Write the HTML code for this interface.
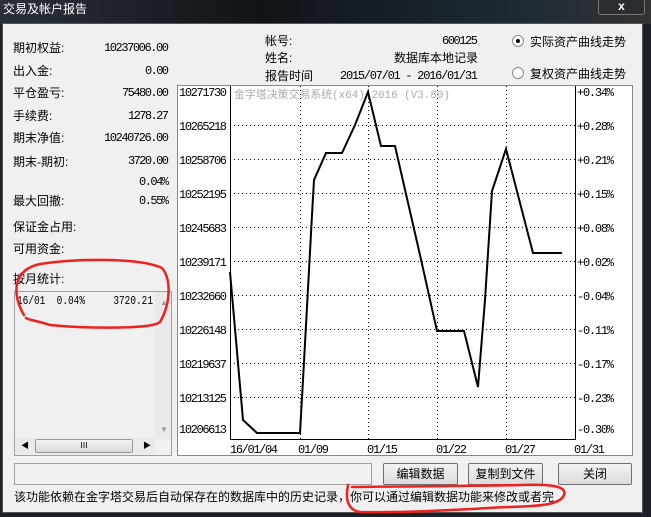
<!DOCTYPE html>
<html><head><meta charset="utf-8"><style>
*{margin:0;padding:0;box-sizing:border-box}
body{width:651px;height:517px;background:#1a2026;position:relative;overflow:hidden;font-family:"Liberation Sans","Noto Sans CJK SC",sans-serif;font-size:12px;color:#000}
.a{position:absolute;white-space:nowrap}
.btn{position:absolute;border:1px solid #707070;background:linear-gradient(#f2f2f2,#dcdcdc);border-radius:2px;text-align:center;line-height:20px;font-size:12px}
</style></head><body>
<div class="a" style="left:0;top:0;width:651px;height:24px;background:linear-gradient(90deg,#2a3038,#101418 40%,#1e2a33 80%,#333)"></div>
<div class="a" style="left:3px;top:0px;color:#fff;font-size:12px;line-height:18px">交易及帐户报告</div>
<div class="a" style="left:598px;top:-2px;width:47px;height:17px;border:1px solid #777;border-radius:3px;background:#2a2e33;color:#fff;text-align:center;font-weight:bold;line-height:14px">x</div>
<div class="a" style="left:2px;top:23px;width:641px;height:490px;background:#f0f0f0;border:1px solid #555"></div>

<div class="a" style="left:13px;top:39px">期初权益:</div>
<div class="a" style="left:13px;top:62px">出入金:</div>
<div class="a" style="left:13px;top:84px">平仓盈亏:</div>
<div class="a" style="left:13px;top:107px">手续费:</div>
<div class="a" style="left:13px;top:129px">期末净值:</div>
<div class="a" style="left:13px;top:153px">期末-期初:</div>
<div class="a" style="left:13px;top:192px">最大回撤:</div>
<div class="a" style="left:13px;top:218px">保证金占用:</div>
<div class="a" style="left:13px;top:240px">可用资金:</div>
<div class="a" style="left:13px;top:270px">按月统计:</div>

<div class="a" style="left:14px;top:291px;width:158px;height:165px;border:1px solid #a0a0a0;background:#f0f0f0"></div>
<div class="a" style="left:155px;top:292px;width:16px;height:147px;background:#eaeaea"></div>
<div class="a" style="left:160px;top:298px;color:#999;font-size:8px">▲</div>
<div class="a" style="left:160px;top:425px;color:#999;font-size:8px">▼</div>
<div class="a" style="left:15px;top:438px;width:140px;height:16px;background:#eaeaea"></div>
<div class="a" style="left:35px;top:439px;width:98px;height:14px;border:1px solid #999;border-radius:2px;background:linear-gradient(#f4f4f4,#d8d8d8);text-align:center;font-size:8px;line-height:12px">Ⅲ</div>
<div class="a" style="left:21px;top:440px;font-size:8px">◀</div>
<div class="a" style="left:143px;top:440px;font-size:8px">▶</div>

<div class="a" style="left:265px;top:32px">帐号:</div>
<div class="a" style="left:265px;top:49px">姓名:</div><div class="a" style="left:380px;top:49px;width:98px;text-align:right">数据库本地记录</div>
<div class="a" style="left:265px;top:67px">报告时间</div>
<div class="a" style="left:512px;top:35px;width:12px;height:12px;border-radius:50%;border:1px solid #888;background:#fff"></div><div class="a" style="left:516px;top:39px;width:4px;height:4px;border-radius:50%;background:#000"></div>
<div class="a" style="left:530px;top:33px">实际资产曲线走势</div>
<div class="a" style="left:512px;top:67px;width:12px;height:12px;border-radius:50%;border:1px solid #888;background:#fff"></div>
<div class="a" style="left:530px;top:65px">复权资产曲线走势</div>

<svg class="a" style="left:0;top:0" width="651" height="517">
<g font-family="Liberation Mono,monospace" font-size="12" lengthAdjust="spacingAndGlyphs" text-anchor="end">
<text x="169" y="51" textLength="65">10237006.00</text>
<text x="169" y="74" textLength="24">0.00</text>
<text x="169" y="96" textLength="47">75480.00</text>
<text x="169" y="119" textLength="41">1278.27</text>
<text x="169" y="141" textLength="65">10240726.00</text>
<text x="169" y="164" textLength="41">3720.00</text>
<text x="169" y="185" textLength="30">0.04%</text>
<text x="169" y="204" textLength="30">0.55%</text>
<text x="478" y="44" textLength="36">600125</text>
<text x="478" y="79" textLength="138">2015/07/01 - 2016/01/31</text>
</g>
<text x="17" y="304" font-family="Liberation Mono,monospace" font-size="12" textLength="136" lengthAdjust="spacingAndGlyphs" xml:space="preserve">16/01  0.04%     3720.21</text>
<rect x="177.5" y="85.5" width="455" height="370" fill="#fff" stroke="#888"/>
<g stroke="#000" stroke-dasharray="1,3" stroke-width="1">
<line x1="230" y1="125.5" x2="576" y2="125.5"/><line x1="230" y1="159.5" x2="576" y2="159.5"/><line x1="230" y1="193.5" x2="576" y2="193.5"/><line x1="230" y1="227.5" x2="576" y2="227.5"/><line x1="230" y1="261.5" x2="576" y2="261.5"/><line x1="230" y1="295.5" x2="576" y2="295.5"/><line x1="230" y1="329.5" x2="576" y2="329.5"/><line x1="230" y1="363.5" x2="576" y2="363.5"/><line x1="230" y1="397.5" x2="576" y2="397.5"/>
<line x1="300.5" y1="86" x2="300.5" y2="440"/><line x1="368.5" y1="86" x2="368.5" y2="440"/><line x1="437.5" y1="86" x2="437.5" y2="440"/><line x1="506.5" y1="86" x2="506.5" y2="440"/>
</g>
<text x="234" y="98" fill="#aaa" font-size="11" font-family="Liberation Mono,Noto Sans CJK SC,monospace" textLength="216" lengthAdjust="spacingAndGlyphs">金字塔决策交易系统(x64) 2016 (V3.80)</text>
<polyline points="230,272 243,420 257,433 300,433 303,380 312,215 314,180 326,153 342,153 355,125 368,92 381,146 395,146 420,255 437,331 464,331 478,387 485,300 492,191 506,149 533,253 562,253" fill="none" stroke="#000" stroke-width="2"/>
<line x1="230.5" y1="86" x2="230.5" y2="440" stroke="#000"/>
<line x1="575.5" y1="86" x2="575.5" y2="440" stroke="#000"/>
<line x1="230" y1="439.5" x2="576" y2="439.5" stroke="#000"/>
<g font-family="Liberation Mono,monospace" font-size="12" lengthAdjust="spacingAndGlyphs">
<text x="179" y="96" textLength="48">10271730</text><text x="179" y="130" textLength="48">10265218</text><text x="179" y="164" textLength="48">10258706</text><text x="179" y="198" textLength="48">10252195</text><text x="179" y="232" textLength="48">10245683</text><text x="179" y="266" textLength="48">10239171</text><text x="179" y="300" textLength="48">10232660</text><text x="179" y="334" textLength="48">10226148</text><text x="179" y="368" textLength="48">10219637</text><text x="179" y="402" textLength="48">10213125</text><text x="179" y="433" textLength="48">10206613</text>
<text x="577" y="96" textLength="37">+0.34%</text><text x="577" y="130" textLength="37">+0.28%</text><text x="577" y="164" textLength="37">+0.21%</text><text x="577" y="198" textLength="37">+0.15%</text><text x="577" y="232" textLength="37">+0.08%</text><text x="577" y="266" textLength="37">+0.02%</text><text x="577" y="300" textLength="37">-0.04%</text><text x="577" y="334" textLength="37">-0.11%</text><text x="577" y="368" textLength="37">-0.17%</text><text x="577" y="402" textLength="37">-0.23%</text><text x="577" y="433" textLength="37">-0.30%</text>
<text x="230" y="453" textLength="48">16/01/04</text><text x="298" y="453" textLength="31">01/09</text><text x="367" y="453" textLength="31">01/15</text><text x="436" y="453" textLength="31">01/22</text><text x="505" y="453" textLength="31">01/27</text><text x="574" y="453" textLength="31">01/31</text>
</g>
</svg>

<div class="a" style="left:14px;top:463px;width:358px;height:22px;border:1px solid #a0a0a0;background:#f0f0f0"></div>
<div class="btn" style="left:383px;top:463px;width:75px;height:22px">编辑数据</div>
<div class="btn" style="left:468px;top:463px;width:75px;height:22px">复制到文件</div>
<div class="btn" style="left:558px;top:463px;width:74px;height:22px">关闭</div>
<div class="a" style="left:14px;top:488px;font-size:12px">该功能依赖在金字塔交易后自动保存在的数据库中的历史记录，你可以通过编辑数据功能来修改或者完</div>

<svg class="a" style="left:0;top:0" width="651" height="517">
<g fill="none" stroke="#f02020" stroke-width="2.5" stroke-linecap="round">
<path d="M24,315 C12,295 12,270 40,264 C80,258 140,258 162,268 C172,280 170,305 160,322 C150,330 80,328 50,325 C35,320 28,320 26,318"/>
<path d="M348,485 C345,500 348,510 360,512 C420,513 480,508 510,507 C540,506 560,505 564,495 C568,485 545,484 520,485 C490,486 420,486 352,487"/>
</g>
</svg>
</body></html>
